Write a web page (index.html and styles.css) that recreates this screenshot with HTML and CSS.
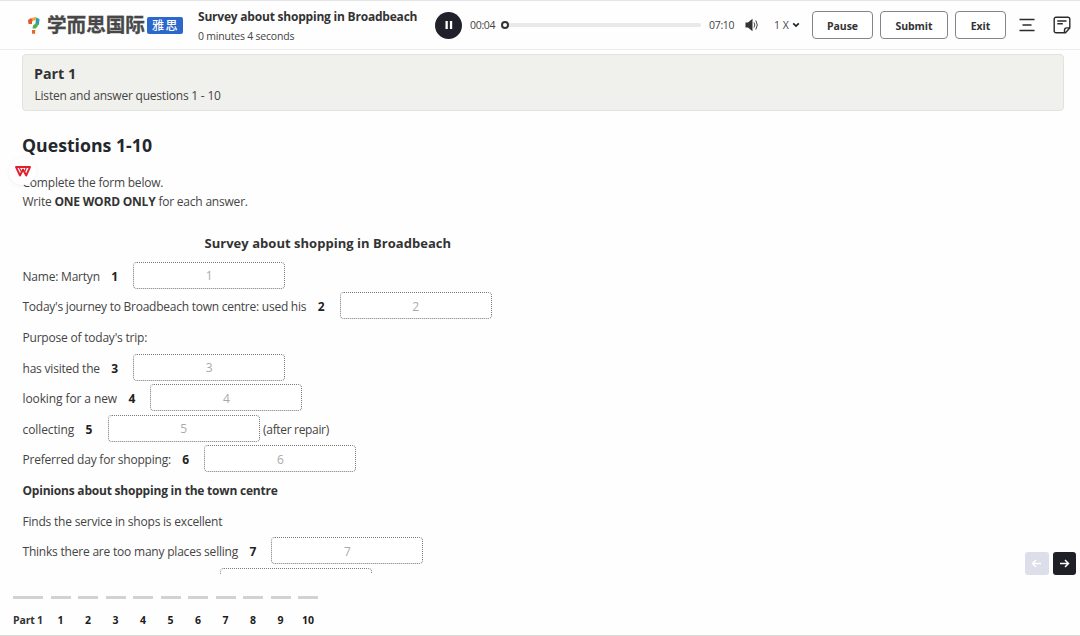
FILE: index.html
```html
<!DOCTYPE html>
<html lang="en">
<head>
    <meta charset="UTF-8">
    <meta name="viewport" content="width=device-width, initial-scale=1.0">
    <title>Survey about shopping in Broadbeach</title>
    <link rel="stylesheet" href="styles.css">
</head>
<body>

    <header class="header">
        <div class="logo">
            <svg class="logo-mark" width="14" height="19" viewBox="0 0 14 19">
                <path d="M1 4L4 2L6 4L5 6L5 8L1.500 8Z" fill="#e8542c"/>
                <path d="M4 2L9 1L8.500 4.500L6 4.500Z" fill="#f3a52b"/>
                <path d="M9 1.500L12.500 3L12 8.500L8.500 8Z" fill="#27a0b5"/>
                <path d="M8.500 7.500L12 8L9 12.500L5.500 12.500L6 9.500Z" fill="#55b04c"/>
                <path d="M5 14L8.300 14L8 17.800L5 17.800Z" fill="#e6662f"/>
            </svg>
            <span class="logo-name">学而思国际</span>
            <span class="logo-tag">雅思</span>
        </div>

        <div class="title">
            <h1>Survey about shopping in Broadbeach</h1>
            <p>0 minutes 4 seconds</p>
        </div>

        <div class="player">
            <button class="play" aria-label="Pause audio">
                <svg width="8" height="8" viewBox="0 0 8 8"><path d="M0.500 0h2.300v8h-2.300zM4.900 0h2.300v8h-2.300z" fill="#fff"/></svg>
            </button>
            <span class="time">00:04</span>
            <div class="track"><span class="knob"></span></div>
            <span class="time total">07:10</span>
            <svg class="volume" width="14" height="14" viewBox="0 0 14 14">
                <path d="M0.500 4.500h2.500l4.500-3.800v12.600l-4.500-3.800h-2.500z" fill="#333"/>
                <path d="M9 4.500q1.600 2.500 0 5M10.800 2.500q3 4.500 0 9" fill="none" stroke="#444" stroke-width="1"/>
            </svg>
            <span class="speed">1 X</span>
            <svg width="8" height="6" viewBox="0 0 8 6"><path d="M1.200 1.300L4 4l2.800-2.700" fill="none" stroke="#222" stroke-width="1.700"/></svg>
        </div>

        <div class="actions">
            <button class="btn">Pause</button>
            <button class="btn btn-submit">Submit</button>
            <button class="btn btn-exit">Exit</button>
        </div>

        <svg class="menu" width="16" height="14" viewBox="0 0 16 14">
            <path d="M0.500 1.500h15M3.500 7h9M0.500 12.500h15" stroke="#2b2b2b" stroke-width="1.400"/>
        </svg>
        <svg class="note" width="18" height="18" viewBox="0 0 18 18">
            <path d="M11.500 16.700H3A1.800 1.800 0 0 1 1.200 14.900V3A1.800 1.800 0 0 1 3 1.200h12A1.800 1.800 0 0 1 16.800 3v9l-4.300 4.700h-1v-2.600a2.200 2.200 0 0 1 2.200-2.200h3M4.300 5h9.200M4.300 7.800h5.500" fill="none" stroke="#2b2b2b" stroke-width="1.400"/>
        </svg>
    </header>

    <main class="content">
        <section class="part">
            <h2>Part 1</h2>
            <p>Listen and answer questions 1 - 10</p>
        </section>

        <h2 class="questions-title">Questions 1-10</h2>
        <div class="intro">
            <p>Complete the form below.</p>
            <p>Write <strong>ONE WORD ONLY</strong> for each answer.</p>
        </div>

        <div class="form">
            <h3>Survey about shopping in Broadbeach</h3>
            <div class="row"><span>Name: Martyn</span><b>1</b><input placeholder="1"></div>
            <div class="row"><span class="tight">Today's journey to Broadbeach town centre: used his</span><b>2</b><input placeholder="2"></div>
            <div class="row"><span>Purpose of today's trip:</span></div>
            <div class="row"><span>has visited the</span><b>3</b><input placeholder="3"></div>
            <div class="row"><span class="loose">looking for a new</span><b>4</b><input placeholder="4"></div>
            <div class="row"><span class="loose">collecting</span><b>5</b><input placeholder="5"><span class="after">(after repair)</span></div>
            <div class="row"><span>Preferred day for shopping:</span><b>6</b><input placeholder="6"></div>
            <div class="row"><strong>Opinions about shopping in the town centre</strong></div>
            <div class="row"><span>Finds the service in shops is excellent</span></div>
            <div class="row"><span>Thinks there are too many places selling</span><b>7</b><input placeholder="7"></div>
            <div class="row row-last"><input></div>
        </div>
    </main>

    <footer class="footer">
        <a class="tab tab-part">Part 1</a>
        <a class="tab">1</a>
        <a class="tab">2</a>
        <a class="tab">3</a>
        <a class="tab">4</a>
        <a class="tab">5</a>
        <a class="tab">6</a>
        <a class="tab">7</a>
        <a class="tab">8</a>
        <a class="tab">9</a>
        <a class="tab">10</a>
    </footer>

    <!-- Floating controls -->
    <div class="float-badge">
        <svg width="16" height="11" viewBox="0 0 16 11">
            <path d="M1 1h14l-3.800 8.500L8 3.500 5 9.500z" fill="none" stroke="#e0202f" stroke-width="1.900" stroke-linejoin="round"/>
            <path d="M4 1l2.200 4.500M11.500 1L9.800 5.500" stroke="#e0202f" stroke-width="1.200"/>
        </svg>
    </div>
    <div class="pager">
        <button class="prev" aria-label="Previous"><svg width="11" height="9" viewBox="0 0 11 9"><path d="M10 4.500H1.500M5 1L1.500 4.500L5 8" fill="none" stroke="#fff" stroke-width="1.500"/></svg></button>
        <button class="next" aria-label="Next"><svg width="11" height="9" viewBox="0 0 11 9"><path d="M1 4.500h8.500M6 1l3.500 3.500L6 8" fill="none" stroke="#fff" stroke-width="1.500"/></svg></button>
    </div>

</body>
</html>
```
FILE: styles.css
```css
*, *::before, *::after {
    box-sizing: border-box;
    margin: 0;
    padding: 0;
}

body {
    font-family: "Open Sans", "Noto Sans", sans-serif;
    font-size: 12px;
    letter-spacing: -0.21px;
    color: #444;
    background: #fefefe;
    height: 636px;
    display: flex;
    flex-direction: column;
    position: relative;
    overflow: hidden;
}

button {
    font-family: inherit;
    border: none;
}

svg {
    flex: none;
}

/* Header */
.header {
    flex: none;
    height: 50px;
    display: flex;
    align-items: center;
    padding-left: 27px;
    border-top: 1px solid #e4e5e7;
    border-bottom: 1px solid #ededed;
    white-space: nowrap;
}

.logo {
    display: flex;
    align-items: center;
    width: 171px;
    font-family: "Noto Sans CJK SC", sans-serif;
    letter-spacing: 0;
}

.logo-mark {
    width: 14px;
    margin-right: 6px;
}

.logo-name {
    font-size: 19.6px;
    font-weight: 700;
    line-height: 24px;
    margin-bottom: 2px;
    color: #484848;
    -webkit-text-stroke: 0.3px #484848;
}

.logo-tag {
    width: 36px;
    height: 17px;
    margin-left: 2px;
    border-radius: 2px;
    background: #2c68cc;
    color: #fff;
    font-size: 12px;
    font-weight: 500;
    line-height: 16px;
    letter-spacing: 1.5px;
    text-align: center;
    padding-left: 1px;
}

.title {
    width: 237px;
    padding-top: 3px;
}

.title h1 {
    font-size: 12px;
    font-weight: 700;
    line-height: 18px;
    color: #333;
}

.title p {
    font-size: 10.5px;
    line-height: 20px;
}

.player {
    display: flex;
    align-items: center;
    width: 377px;
}

.play {
    width: 27px;
    height: 27px;
    margin-right: 8px;
    border-radius: 50%;
    background: #20212a;
    display: flex;
    align-items: center;
    justify-content: center;
}

.time {
    font-size: 10.5px;
    letter-spacing: -0.3px;
    width: 31px;
}

.track {
    width: 200px;
    height: 4px;
    border-radius: 2px;
    background: #e9e9e9;
    display: flex;
    align-items: center;
}

.knob {
    width: 8px;
    height: 8px;
    border: 2px solid #333;
    border-radius: 50%;
    background: #fff;
}

.total {
    margin-left: 8px;
    width: 36px;
}

.volume {
    margin-right: 15px;
}

.speed {
    font-size: 10.5px;
    letter-spacing: 0;
    width: 18px;
}

.actions {
    display: flex;
    gap: 7px;
}

.btn {
    width: 61px;
    height: 28px;
    padding-top: 1px;
    border: 1px solid #858585;
    border-radius: 4px;
    background: #fff;
    color: #333;
    font-size: 10.5px;
    font-weight: 700;
    letter-spacing: -0.1px;
}

.btn-submit {
    width: 68px;
}

.btn-exit {
    width: 51px;
}

.menu {
    margin-left: 13px;
}

.note {
    margin-left: 18px;
}

/* Question sheet */
.content {
    flex: none;
    height: 524px;
    overflow: hidden;
    padding: 4px 16px 0 22px;
}

.part {
    height: 57px;
    padding: 8px 11px;
    border: 1px solid #e2e3e0;
    border-radius: 4px;
    background: #f0f1ed;
}

.part h2 {
    font-size: 14.3px;
    letter-spacing: 0;
    line-height: 21px;
    color: #333;
}

.part p {
    padding-left: 0.5px;
    line-height: 23px;
}

.questions-title {
    margin-top: 20px;
    font-size: 17.7px;
    letter-spacing: 0;
    line-height: 28px;
    color: #24272c;
}

.intro {
    margin-top: 14px;
    padding-left: 0.5px;
    line-height: 19px;
}

.form {
    width: 611px;
    margin-top: 22px;
    padding-left: 0.5px;
}

.form h3 {
    font-size: 13px;
    letter-spacing: 0.03px;
    line-height: 20px;
    padding-left: 182px;
    margin-bottom: 7px;
    color: #333;
}

strong, .row b {
    color: #333;
}

.row {
    display: flex;
    align-items: center;
    height: 30.6px;
    white-space: nowrap;
}

.row span, .row b, .row strong {
    padding-top: 2px;
}

.row .tight {
    letter-spacing: -0.245px;
}

.row .loose {
    letter-spacing: -0.1px;
}

.row b {
    width: 7px;
    margin: 0 15px 0 11.4px;
    color: #222;
}

.row input {
    width: 152px;
    height: 27px;
    padding-top: 1px;
    border: 1px dotted #777;
    border-radius: 4px;
    background: #fff;
    font: inherit;
    text-align: center;
}

.row input::placeholder {
    color: #aaa;
}

.row .after {
    margin-left: 3.5px;
    letter-spacing: -0.33px;
}

.row-last {
    padding-left: 197px;
}

/* Question tabs */
.footer {
    flex: 1;
    display: flex;
    gap: 7.5px;
    padding: 22px 0 0 13px;
    border-bottom: 1px solid #d8dad4;
}

.tab {
    width: 20px;
    height: 34px;
    padding-top: 12px;
    border-top: 3px solid #d2d2d2;
    font-size: 10.5px;
    font-weight: 700;
    letter-spacing: 0;
    line-height: 18px;
    text-align: center;
    color: #1c1c1c;
    white-space: nowrap;
}

.tab-part {
    width: 30px;
    letter-spacing: -0.2px;
    color: #333;
}

/* Floating controls */
.float-badge {
    position: absolute;
    left: 9px;
    top: 158px;
    width: 27px;
    height: 27px;
    border-radius: 50%;
    background: #fff;
    box-shadow: 0 1px 5px rgba(0, 0, 0, 0.06);
    display: flex;
    align-items: center;
    justify-content: center;
}

.pager {
    position: absolute;
    right: 4px;
    top: 552px;
    display: flex;
    gap: 4px;
}

.pager button {
    width: 23.5px;
    height: 23px;
    border-radius: 3px;
    display: flex;
    align-items: center;
    justify-content: center;
}

.pager .prev {
    background: #dcdfe9;
}

.pager .next {
    background: #1e1f27;
}
```
